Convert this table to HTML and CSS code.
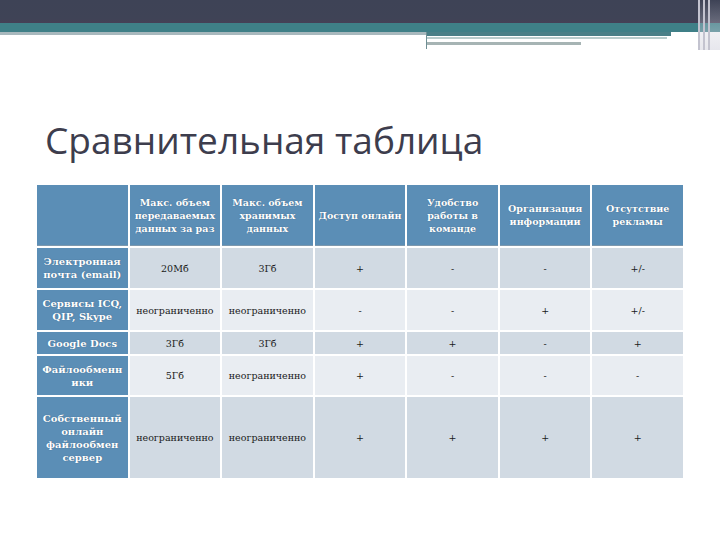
FILE: index.html
```html
<!DOCTYPE html>
<html lang="ru">
<head>
<meta charset="utf-8">
<title>Сравнительная таблица</title>
<link rel="stylesheet" href="styles.css">
</head>
<body>
<div class="slide">
  <div class="topbar"></div>
  <div class="band"></div>
  <div class="rules">
    <div class="rule-left"></div>
    <div class="rule-right">
      <div class="rr-teal"></div>
      <div class="rr-light"></div>
      <div class="rr-gray"></div>
    </div>
  </div>
  <div class="edge"><span></span><span></span><span></span></div>

  <h1 class="title">Сравнительная таблица</h1>

  <div class="grid">
    <div class="cell head"></div>
    <div class="cell head">Макс. объем<br>передаваемых<br>данных за раз</div>
    <div class="cell head">Макс. объем<br>хранимых<br>данных</div>
    <div class="cell head">Доступ онлайн</div>
    <div class="cell head">Удобство<br>работы в<br>команде</div>
    <div class="cell head">Организация<br>информации</div>
    <div class="cell head">Отсутствие<br>рекламы</div>

    <div class="cell side">Электронная<br>почта (email)</div>
    <div class="cell dark">20Мб</div>
    <div class="cell dark">3Гб</div>
    <div class="cell dark">+</div>
    <div class="cell dark">-</div>
    <div class="cell dark">-</div>
    <div class="cell dark">+/-</div>

    <div class="cell side">Сервисы ICQ,<br>QIP, Skype</div>
    <div class="cell light">неограниченно</div>
    <div class="cell light">неограниченно</div>
    <div class="cell light">-</div>
    <div class="cell light">-</div>
    <div class="cell light">+</div>
    <div class="cell light">+/-</div>

    <div class="cell side">Google Docs</div>
    <div class="cell dark">3Гб</div>
    <div class="cell dark">3Гб</div>
    <div class="cell dark">+</div>
    <div class="cell dark">+</div>
    <div class="cell dark">-</div>
    <div class="cell dark">+</div>

    <div class="cell side">Файлообменн<br>ики</div>
    <div class="cell light">5Гб</div>
    <div class="cell light">неограниченно</div>
    <div class="cell light">+</div>
    <div class="cell light">-</div>
    <div class="cell light">-</div>
    <div class="cell light">-</div>

    <div class="cell side">Собственный<br>онлайн<br>файлообмен<br>сервер</div>
    <div class="cell dark">неограниченно</div>
    <div class="cell dark">неограниченно</div>
    <div class="cell dark">+</div>
    <div class="cell dark">+</div>
    <div class="cell dark">+</div>
    <div class="cell dark">+</div>
  </div>
</div>
</body>
</html>
```

FILE: styles.css
```css
html, body {
  margin: 0;
  padding: 0;
  background: #ffffff;
}

.slide {
  position: relative;
  width: 720px;
  height: 540px;
  overflow: hidden;
  background: #ffffff;
}

.topbar {
  height: 23px;
  background: linear-gradient(to bottom, #3e4356 0, #3f4356 19px, #463f56 23px);
}

.band {
  height: 9px;
  background: #3f7f87;
}

.rules {
  display: flex;
  height: 17px;
}

.rule-left {
  width: 426px;
  height: 3px;
  background: #a8b8bd;
}

.rule-right {
  display: flex;
  flex-direction: column;
  width: 244px;
  border-left: 1px solid #6f8f94;
}

.rr-teal {
  height: 4px;
  background: #4a7f87;
}

.rr-light {
  height: 2px;
  margin-top: 1px;
  width: 240px;
  background: #b9cccc;
}

.rr-gray {
  margin-top: 3px;
  height: 3px;
  width: 154px;
  background: #a6b4b4;
}

.edge {
  position: absolute;
  top: 0;
  right: 0;
  width: 22px;
  height: 50px;
  display: flex;
  gap: 3px;
  background: linear-gradient(to bottom, rgba(215, 215, 225, 0.0) 0, rgba(215, 215, 225, 0.6) 100%);
}

.edge span {
  width: 2px;
  background: #c3c3cf;
}

.title {
  margin: 68px 0 0 0;
  padding-left: 45px;
  height: 46px;
  font-family: "Open Sans", "Noto Sans", sans-serif;
  font-weight: 400;
  font-size: 37px;
  line-height: 46px;
  color: #3d3d4d;
}

.grid {
  margin: 22px 0 0 37px;
  width: 646px;
  display: grid;
  grid-template-columns: repeat(7, 1fr);
  grid-template-rows: 61px 40px 40px 22px 39px 81px;
  gap: 2px;
  background: #ffffff;
}

.cell {
  display: flex;
  align-items: center;
  justify-content: center;
  text-align: center;
  font-family: "DejaVu Serif", "Liberation Serif", serif;
  font-size: 9.5px;
  line-height: 13px;
  color: #1a1a1a;
}

.head {
  background: #5b8eb6;
  color: #ffffff;
  font-weight: bold;
  text-shadow: 0 0 1px #34587a;
  border-bottom: 1px solid #7d98ad;
}

.side {
  background: #5b8eb6;
  color: #ffffff;
  font-weight: bold;
  font-size: 10px;
  text-shadow: 0 0 1px #34587a;
}

.dark {
  background: #d1dae3;
}

.light {
  background: #e9edf2;
}
```
